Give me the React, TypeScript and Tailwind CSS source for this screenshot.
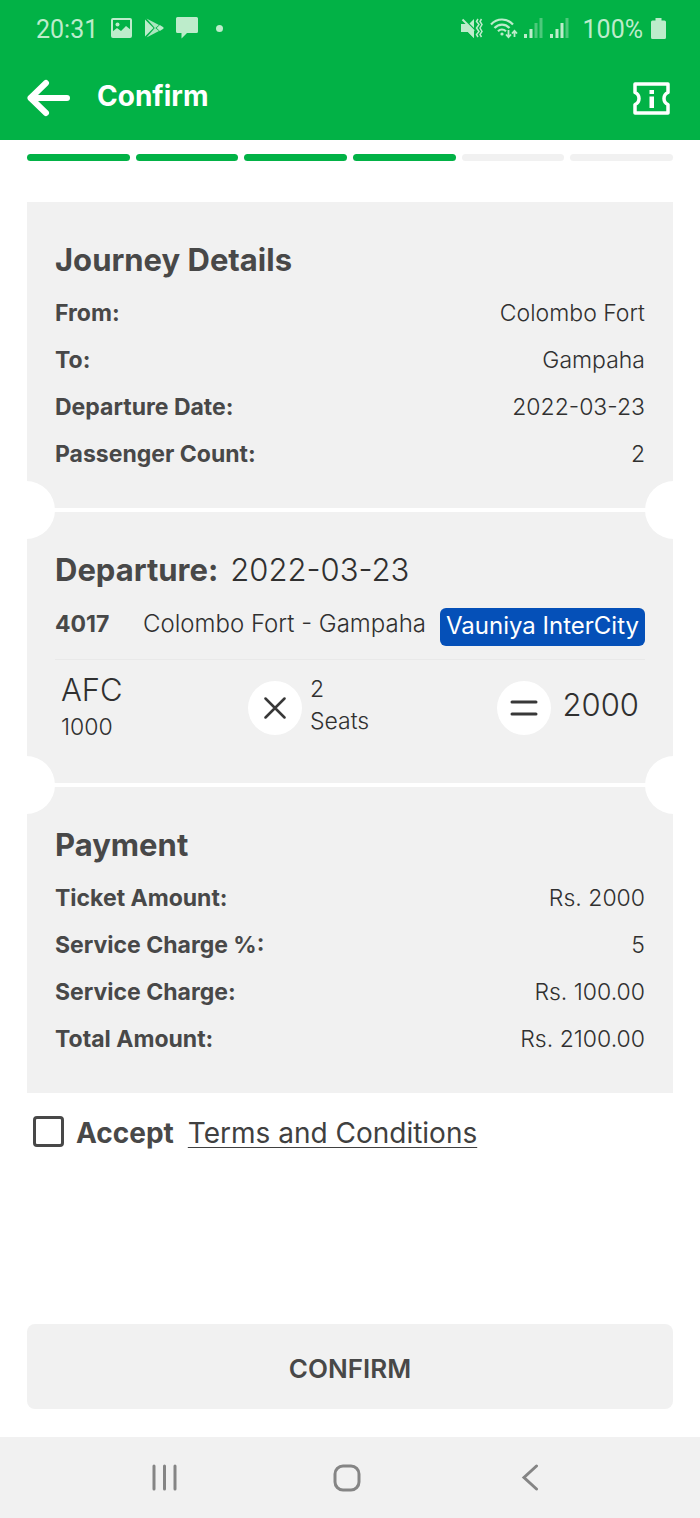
import React, { useState } from 'react';

type Row = { label: string; value: string };

const TOTAL_STEPS = 6;
const CURRENT_STEP = 4;

const journeyRows: Row[] = [
  { label: 'From:', value: 'Colombo Fort' },
  { label: 'To:', value: 'Gampaha' },
  { label: 'Departure Date:', value: '2022-03-23' },
  { label: 'Passenger Count:', value: '2' },
];

const paymentRows: Row[] = [
  { label: 'Ticket Amount:', value: 'Rs. 2000' },
  { label: 'Service Charge %:', value: '5' },
  { label: 'Service Charge:', value: 'Rs. 100.00' },
  { label: 'Total Amount:', value: 'Rs. 2100.00' },
];

const StatusBar: React.FC = () => (
  <div className="flex h-14 items-center justify-between pl-9 pr-[34px] font-['Roboto',sans-serif] text-[25px] font-normal text-[#bdeccb]">
    <div className="flex items-center">
      <span className="w-[75px] pt-1">20:31</span>
      {/* Picture */}
      <svg width="22" height="20" viewBox="0 0 22 20" fill="none">
        <rect x="1" y="1" width="19" height="18" rx="1" stroke="currentColor" strokeWidth="2" />
        <circle cx="6.5" cy="6.5" r="2" fill="currentColor" />
        <path d="M1 14l5-4 4 3 5-5 5 4v7H1z" fill="currentColor" />
      </svg>
      {/* Play store */}
      <svg className="ml-3" width="20" height="20" viewBox="0 0 20 20" fill="currentColor">
        <path d="M0 1.500L8.500 10 0 18.500z" />
        <path d="M1.500 .5L14 7l-4 3.200z" opacity="0.9" />
        <path d="M1.500 19.500L14 13l-4-3.200z" opacity="0.9" />
        <path d="M14.800 7l3.200 2q1.500 1 0 2l-3.200 2-3.200-3z" />
      </svg>
      {/* Message */}
      <svg className="ml-[11px]" width="22" height="22" viewBox="0 0 22 22" fill="currentColor">
        <path d="M1.500 0h19A1.500 1.500 0 0 1 22 1.500v13a1.500 1.500 0 0 1-1.500 1.500H11l-5.500 5.500V16h-4A1.500 1.500 0 0 1 0 14.500v-13A1.500 1.500 0 0 1 1.500 0z" />
      </svg>
      <span className="ml-[18px] size-[7px] rounded-full bg-[#bdeccb]" />
    </div>
    <div className="flex items-center">
      {/* Muted, vibrating */}
      <svg width="22" height="20" viewBox="0 0 22 20" fill="currentColor">
        <path d="M0 6h3l10 10v4l-6-6H0z" />
        <path d="M0 6h6l7 7v7l-6-6H0z" />
        <path d="M13 1v9L8.500 5.500z" />
        <path d="M1.500 1.500L13 13" stroke="currentColor" strokeWidth="2" />
        <path d="M17 1l-1.500 2.500 2.500 3-2.500 3.500 2.500 3.500-2.500 3 1.500 2.500M20.500 1L19 3.500l2 3-2 3.500 2 3.500-2 3 1.500 2.500" stroke="currentColor" strokeWidth="1.500" fill="none" />
      </svg>
      {/* Wifi with traffic arrows */}
      <svg className="ml-[7px]" width="28" height="21" viewBox="0 0 28 21" fill="none" stroke="currentColor" strokeWidth="2.200">
        <path d="M1 6.500C7-.2 17-.2 23 6.500M4.500 10c4.200-4.600 10.800-4.600 15 0M8 13.300c2.300-2.400 5.500-2.400 8 0" />
        <circle cx="12" cy="16" r="1.600" fill="currentColor" stroke="none" />
        <path d="M18.500 12v7M16 16.500l2.500 2.700 2.500-2.700M24.500 19v-6M22 15.500l2.500-2.700 2.500 2.700" strokeWidth="1.800" />
      </svg>
      {/* Sim 1 */}
      <svg className="ml-[6px]" width="19" height="20" viewBox="0 0 19 20" fill="currentColor">
        <rect y="16" width="3" height="4" />
        <rect x="5.500" y="11" width="3" height="9" />
        <rect x="10.500" y="5" width="3" height="15" opacity="0.4" />
        <rect x="15.500" width="3" height="20" opacity="0.4" />
      </svg>
      {/* Sim 2 */}
      <svg className="ml-[7px]" width="19" height="20" viewBox="0 0 19 20" fill="currentColor">
        <rect y="16" width="3" height="4" />
        <rect x="5.500" y="11" width="3" height="9" />
        <rect x="10.500" y="5" width="3" height="15" />
        <rect x="15.500" width="3" height="20" opacity="0.4" />
      </svg>
      <span className="ml-[14px] pt-1">100%</span>
      {/* Battery */}
      <svg className="ml-2" width="15" height="21" viewBox="0 0 15 21" fill="currentColor">
        <path d="M4.500 0h6v2.500h3A1.500 1.500 0 0 1 15 4v15.500a1.500 1.500 0 0 1-1.500 1.500h-12A1.500 1.500 0 0 1 0 19.500V4a1.500 1.500 0 0 1 1.500-1.500h3z" />
      </svg>
    </div>
  </div>
);

const DetailRows: React.FC<{ rows: Row[] }> = ({ rows }) => (
  <dl className="mt-1.5">
    {rows.map((row) => (
      <div key={row.label} className="flex h-[47px] items-center justify-between">
        <dt className="font-bold">{row.label}</dt>
        <dd className="font-light text-[#303030]">{row.value}</dd>
      </div>
    ))}
  </dl>
);

// White tear line with a notch cut out on both edges of the ticket
const TearLine: React.FC = () => (
  <div className="relative h-1 bg-white">
    <span className="absolute -left-[30px] -top-[27px] size-[58px] rounded-full bg-white" />
    <span className="absolute -right-[30px] -top-[27px] size-[58px] rounded-full bg-white" />
  </div>
);

const App: React.FC = () => {
  const [accepted, setAccepted] = useState(false);

  return (
    <div className="flex min-h-screen flex-col overflow-x-hidden bg-white font-['Inter',sans-serif] text-[23px] text-[#484848]">
      <header className="bg-[#02b246] text-white">
        <StatusBar />
        <div className="flex h-[84px] items-center px-[27px]">
          <button type="button" aria-label="Back">
            <svg width="44" height="38" viewBox="0 0 44 38" fill="none" stroke="currentColor" strokeWidth="6" strokeLinecap="round" strokeLinejoin="round">
              <path d="M40 19H3.500M19 4L3.500 19 19 34" />
            </svg>
          </button>
          <h1 className="ml-[26px] pb-1 text-[28px] font-bold leading-9">Confirm</h1>
          <button type="button" aria-label="Ticket information" className="ml-auto mr-[3px]">
            <svg width="37" height="33" viewBox="0 0 37 33" fill="none">
              <path d="M2 2h33v8.500a6.500 6.500 0 0 0 0 12V31H2v-8.500a6.500 6.500 0 0 0 0-12z" stroke="currentColor" strokeWidth="3.500" strokeLinejoin="round" />
              <path d="M16.500 8h4.500v4h-4.500zM16.500 14.500h4.500V26h-4.500z" fill="currentColor" />
            </svg>
          </button>
        </div>
      </header>

      <main className="flex flex-1 flex-col px-[27px] pb-7 pt-3.5">
        <div className="flex gap-1.5" role="progressbar" aria-label="Booking progress" aria-valuemin={0} aria-valuemax={TOTAL_STEPS} aria-valuenow={CURRENT_STEP}>
          {Array.from({ length: TOTAL_STEPS }, (_, idx) => (
            <span key={idx} className={`h-[7px] flex-1 rounded-full ${idx < CURRENT_STEP ? 'bg-[#02b246]' : 'bg-[#f1f1f1]'}`} />
          ))}
        </div>

        <div className="mt-[41px] bg-[#f1f1f1]">
          {/* Journey */}
          <section className="px-7 pb-[30px] pt-[34px]">
            <h2 className="text-[31px] font-bold leading-[48px]">Journey Details</h2>
            <DetailRows rows={journeyRows} />
          </section>

          <TearLine />

          {/* Departure */}
          <section className="px-7 pb-[38px] pt-[34px]">
            <h2 className="flex gap-3 text-[31px] font-bold leading-[48px]">
              Departure:
              <span className="font-light text-[#303030]">2022-03-23</span>
            </h2>
            <div className="mt-3.5 flex items-start border-b border-[#e9e9e9] pb-[13px] text-[24px] leading-8">
              <span className="w-[88px] shrink-0 text-[23px] font-bold">4017</span>
              <span className="flex-1 whitespace-nowrap font-light text-[#303030]">Colombo Fort - Gampaha</span>
              <span className="whitespace-nowrap rounded-md bg-[#0550b8] px-1.5 pb-1 pt-0.5 text-white">Vauniya InterCity</span>
            </div>
            <div className="flex items-center px-1.5 pt-[11px] font-light text-[#303030]">
              <div className="w-[187px]">
                <div className="text-[31px] leading-[38px]">AFC</div>
                <div className="leading-9">1000</div>
              </div>
              <span className="flex size-[54px] items-center justify-center rounded-full bg-white">
                <svg width="22" height="22" viewBox="0 0 22 22" stroke="#383838" strokeWidth="2.500" strokeLinecap="round">
                  <path d="M1.500 1.500l19 19M20.500 1.500l-19 19" />
                </svg>
              </span>
              <div className="ml-2 pb-1.5 leading-8">
                <div>2</div>
                <div>Seats</div>
              </div>
              <span className="ml-auto flex size-[54px] items-center justify-center rounded-full bg-white">
                <svg width="28" height="16" viewBox="0 0 28 16" stroke="#383838" strokeWidth="3" strokeLinecap="round">
                  <path d="M2 2h24M2 14h24" />
                </svg>
              </span>
              <span className="ml-3 pb-1.5 text-[31px]">2000</span>
            </div>
          </section>

          <TearLine />

          {/* Payment */}
          <section className="px-7 pb-[30px] pt-[34px]">
            <h2 className="text-[31px] font-bold leading-[48px]">Payment</h2>
            <DetailRows rows={paymentRows} />
          </section>
        </div>

        <div className="mt-5 flex items-center pl-1.5 text-[28px] leading-10">
          <input
            id="accept"
            type="checkbox"
            checked={accepted}
            onChange={(e) => setAccepted(e.target.checked)}
            className="mb-1 size-[31px] appearance-none rounded-[4px] border-[3px] border-[#484848] checked:bg-[#02b246]"
          />
          <label htmlFor="accept" className="ml-3 font-bold">Accept</label>
          <a href="#terms" className="ml-3.5 font-normal text-[#404040] underline decoration-1 underline-offset-4">Terms and Conditions</a>
        </div>

        <button type="button" className="mt-auto h-[85px] rounded-lg bg-[#f1f1f1] pt-1 text-[26px] font-semibold">
          CONFIRM
        </button>
      </main>

      {/* System navigation */}
      <nav className="flex h-[81px] items-center justify-between bg-[#f1f1f1] pl-[151px] pr-[161px] text-[#858585]">
        <button type="button" aria-label="Recent apps">
          <svg width="27" height="27" viewBox="0 0 27 27" stroke="currentColor" strokeWidth="3" strokeLinecap="round">
            <path d="M3 2v23M13.500 2v23M24 2v23" />
          </svg>
        </button>
        <button type="button" aria-label="Home" className="mr-1.5">
          <svg width="28" height="28" viewBox="0 0 28 28" fill="none" stroke="currentColor" strokeWidth="3">
            <rect x="2" y="2" width="24" height="24" rx="8" />
          </svg>
        </button>
        <button type="button" aria-label="Go back">
          <svg width="18" height="27" viewBox="0 0 18 27" fill="none" stroke="currentColor" strokeWidth="3" strokeLinecap="round">
            <path d="M15.500 2L3 13.500 15.500 25" />
          </svg>
        </button>
      </nav>
    </div>
  );
};

export default App;
